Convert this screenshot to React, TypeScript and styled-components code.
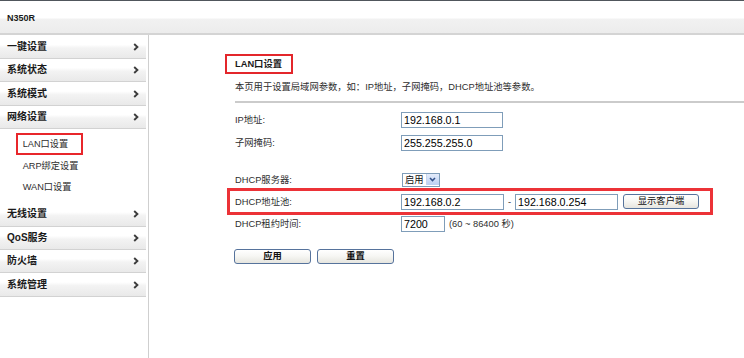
import styled, { createGlobalStyle } from 'styled-components';

const Global = createGlobalStyle`
  html, body { margin: 0; padding: 0; background: #fff; }
  body {
    font-family: "Liberation Sans", "Noto Sans CJK SC", sans-serif;
    font-size: 9.3px;
    line-height: 14px;
    color: #2e2e2e;
  }
`;

const Page = styled.div`
  width: 744px;
  height: 358px;
  overflow: hidden;
  display: flex;
  flex-direction: column;
  border-top: 1px solid #50565c;
  box-sizing: border-box;
`;

const TopBar = styled.div`
  height: 34px;
  display: flex;
  align-items: center;
  padding: 1px 0 0 7px;
  box-sizing: border-box;
  background: linear-gradient(#ffffff 0%, #ffffff 52%, #f1f1f1 58%, #ececec 100%);
  border-bottom: 2px solid #d4d4d4;
  font-weight: bold;
  font-size: 9px;
  color: #1a1a1a;
`;

const Body = styled.div`
  flex: 1;
  display: flex;
`;

const Sidebar = styled.div`
  width: 148px;
  border-right: 1px solid #cfcfcf;
  padding-top: 0.7px;
`;

const MenuItem = styled.div`
  height: 22.4px;
  margin-right: 2px;
  display: flex;
  align-items: center;
  justify-content: space-between;
  padding: 0 7px 0 7px;
  background: linear-gradient(#ffffff 0%, #ffffff 40%, #f3f3f3 55%, #e9e9e9 100%);
  border-bottom: 1px solid #d2d2d2;
  font-size: 10px;
  font-weight: bold;
  color: #1a1a1a;
`;

const SubMenu = styled.div`
  padding: 3.9px 0 5px 16px;
  display: flex;
  flex-direction: column;
`;

const SubItem = styled.div<{ $active?: boolean }>`
  height: 21.7px;
  display: flex;
  align-items: center;
  padding-left: 6.7px;
  width: 67px;
  box-sizing: border-box;
  font-size: 9.2px;
  color: #2e2e2e;
  box-shadow: ${p => (p.$active ? 'inset 0 0 0 2px #e8262b' : 'none')};
  white-space: nowrap;
`;

const Content = styled.div`
  flex: 1;
  padding: 19px 0 0 76px;
`;

const Title = styled.div`
  display: inline-block;
  border: 2px solid #e3262b;
  padding: 0 9px 0 8px;
  height: 16px;
  line-height: 16px;
  font-weight: bold;
  color: #1a1a1a;
`;

const Desc = styled.div`
  margin: 6px 0 0 10px;
`;

const Divider = styled.div`
  margin: 6.7px 0 0 10px;
  height: 2px;
  background: #cbcbcb;
`;

const Form = styled.div`
  padding: 6.3px 0 0 10px;
`;

const Row = styled.div<{ $gap?: number }>`
  display: flex;
  align-items: center;
  height: 23px;
  margin-top: ${p => p.$gap ?? 0}px;
`;

const HighlightRow = styled.div`
  display: flex;
  align-items: center;
  box-sizing: border-box;
  width: 486px;
  height: 26.7px;
  margin: -3.2px 0 -2.3px -8.3px;
  padding-left: 5.3px;
  border: 3px solid #ec3237;
`;

const Label = styled.div`
  width: 166px;
`;

const TextInput = styled.input<{ $w: number }>`
  width: ${p => p.$w}px;
  height: 16px;
  box-sizing: border-box;
  border: 1px solid #7f9db9;
  padding: 0 2px;
  font-family: "Liberation Sans", sans-serif;
  font-size: 10.7px;
  color: #000;
  outline: none;
  background: #fff;
`;

const Dash = styled.span`
  width: 11px;
  text-align: center;
`;

const Hint = styled.span`
  margin-left: 4px;
`;

const Select = styled.div`
  display: flex;
  align-items: center;
  height: 14px;
  width: 38px;
  margin-left: 1px;
  border: 1px solid #7f9db9;
  box-sizing: border-box;
  color: #111;
  padding-left: 2px;
  justify-content: space-between;
`;

const SelectArrow = styled.span`
  width: 12px;
  height: 11px;
  margin-right: 0.5px;
  background: linear-gradient(#e4ecfb, #bccff2);
  border-left: 1px solid #c8d6ee;
  display: flex;
  align-items: center;
  justify-content: center;
`;

const Button = styled.button<{ $w: number; $bold?: boolean }>`
  width: ${p => p.$w}px;
  height: 15px;
  padding: 0;
  border: 1px solid #56739c;
  border-radius: 3px;
  background: linear-gradient(#ffffff 0%, #f7f7f4 45%, #e6e5df 100%);
  font-family: "Liberation Sans", "Noto Sans CJK SC", sans-serif;
  font-size: 9.3px;
  font-weight: ${p => (p.$bold ? 'bold' : 'normal')};
  color: #111;
  line-height: 13px;
`;

const ClientsButton = styled(Button)`
  margin-left: 5px;
`;

const Actions = styled.div`
  display: flex;
  gap: 6px;
  margin: 13px 0 0 -1px;
`;

const Chevron = () => (
  <svg width="6" height="8" viewBox="0 0 6 8">
    <path d="M1.2 1 L4.4 4 L1.2 7" fill="none" stroke="#3c3c3c" strokeWidth="1.9" />
  </svg>
);

const Menu = ({ label }: { label: string }) => (
  <MenuItem>
    <span>{label}</span>
    <Chevron />
  </MenuItem>
);

export default function App() {
  return (
    <>
      <Global />
      <Page>
        <TopBar>N350R</TopBar>
        <Body>
          <Sidebar>
            <Menu label="一键设置" />
            <Menu label="系统状态" />
            <Menu label="系统模式" />
            <Menu label="网络设置" />
            <SubMenu>
              <SubItem $active>LAN口设置</SubItem>
              <SubItem>ARP绑定设置</SubItem>
              <SubItem>WAN口设置</SubItem>
            </SubMenu>
            <Menu label="无线设置" />
            <Menu label="QoS服务" />
            <Menu label="防火墙" />
            <Menu label="系统管理" />
          </Sidebar>
          <Content>
            <Title>LAN口设置</Title>
            <Desc>本页用于设置局域网参数，如：IP地址，子网掩码，DHCP地址池等参数。</Desc>
            <Divider />
            <Form>
              <Row>
                <Label>IP地址:</Label>
                <TextInput $w={102} defaultValue="192.168.0.1" />
              </Row>
              <Row>
                <Label>子网掩码:</Label>
                <TextInput $w={102} defaultValue="255.255.255.0" />
              </Row>
              <Row $gap={13.5}>
                <Label>DHCP服务器:</Label>
                <Select>
                  启用
                  <SelectArrow>
                    <svg width="7" height="5" viewBox="0 0 7 5">
                      <path d="M1 1 L3.5 3.6 L6 1" fill="none" stroke="#34528a" strokeWidth="1.5" />
                    </svg>
                  </SelectArrow>
                </Select>
              </Row>
              <HighlightRow>
                <Label>DHCP地址池:</Label>
                <TextInput $w={103} defaultValue="192.168.0.2" />
                <Dash>-</Dash>
                <TextInput $w={103} defaultValue="192.168.0.254" />
                <ClientsButton $w={76}>显示客户端</ClientsButton>
              </HighlightRow>
              <Row>
                <Label>DHCP租约时间:</Label>
                <TextInput $w={44} defaultValue="7200" />
                <Hint>(60 ~ 86400 秒)</Hint>
              </Row>
              <Actions>
                <Button $w={77} $bold>应用</Button>
                <Button $w={77} $bold>重置</Button>
              </Actions>
            </Form>
          </Content>
        </Body>
      </Page>
    </>
  );
}
